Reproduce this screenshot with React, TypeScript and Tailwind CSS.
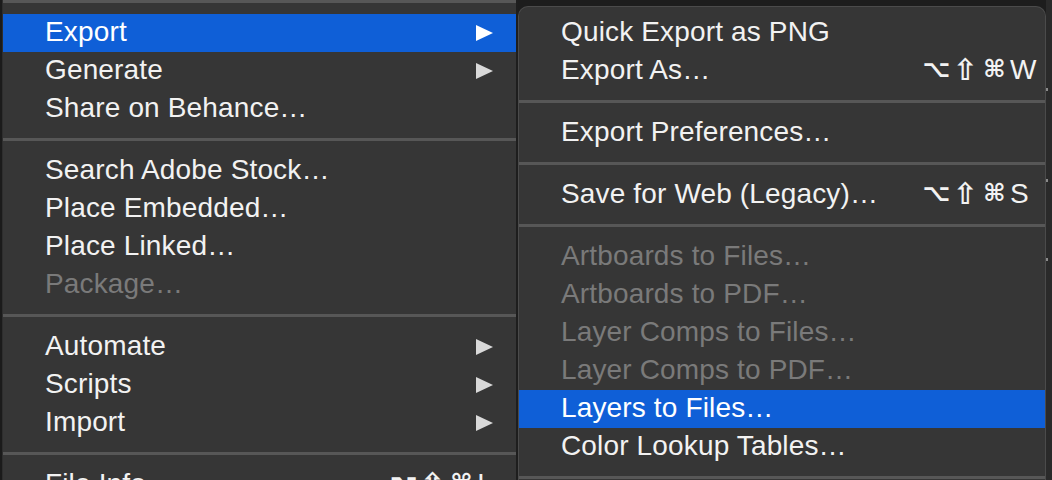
type Item =
  | { kind: 'sep' }
  | { kind: 'item'; label: string; disabled?: boolean; active?: boolean; arrow?: boolean; keys?: string };

const mainMenu: Item[] = [
  { kind: 'sep' },
  { kind: 'item', label: 'Export', active: true, arrow: true },
  { kind: 'item', label: 'Generate', arrow: true },
  { kind: 'item', label: 'Share on Behance…' },
  { kind: 'sep' },
  { kind: 'item', label: 'Search Adobe Stock…' },
  { kind: 'item', label: 'Place Embedded…' },
  { kind: 'item', label: 'Place Linked…' },
  { kind: 'item', label: 'Package…', disabled: true },
  { kind: 'sep' },
  { kind: 'item', label: 'Automate', arrow: true },
  { kind: 'item', label: 'Scripts', arrow: true },
  { kind: 'item', label: 'Import', arrow: true },
  { kind: 'sep' },
  { kind: 'item', label: 'File Info…', keys: 'I' },
];

const exportMenu: Item[] = [
  { kind: 'item', label: 'Quick Export as PNG' },
  { kind: 'item', label: 'Export As…', keys: 'W' },
  { kind: 'sep' },
  { kind: 'item', label: 'Export Preferences…' },
  { kind: 'sep' },
  { kind: 'item', label: 'Save for Web (Legacy)…', keys: 'S' },
  { kind: 'sep' },
  { kind: 'item', label: 'Artboards to Files…', disabled: true },
  { kind: 'item', label: 'Artboards to PDF…', disabled: true },
  { kind: 'item', label: 'Layer Comps to Files…', disabled: true },
  { kind: 'item', label: 'Layer Comps to PDF…', disabled: true },
  { kind: 'item', label: 'Layers to Files…', active: true },
  { kind: 'item', label: 'Color Lookup Tables…' },
  { kind: 'sep' },
  { kind: 'item', label: 'Convert Video…' },
];

function Separator({ first }: { first?: boolean }) {
  return (
    <div className={`h-[24px] shrink-0 pt-[10px] ${first ? '-mt-[10px]' : ''}`}>
      <div className="h-[3px] bg-[#575757]" />
    </div>
  );
}

function Shortcut({ letter }: { letter: string }) {
  return (
    <span className="flex items-center">
      <span className="inline-block w-[29px] text-center font-['DejaVu_Sans',sans-serif] text-[24px] font-bold">⌥</span>
      <span className="inline-block w-[29px] text-center font-['DejaVu_Sans',sans-serif] text-[30px] font-bold leading-[30px]">⇧</span>
      <span className="inline-block w-[29px] text-center font-['DejaVu_Sans',sans-serif] text-[24px] font-bold">⌘</span>
      <span className="ml-[1px]">{letter}</span>
    </span>
  );
}

function Arrow({ active }: { active?: boolean }) {
  return (
    <svg width="17" height="16" viewBox="0 0 17 16" className="mt-[3px]">
      <path d="M0 0 L17 8 L0 16 Z" fill={active ? '#ffffff' : '#d9d9d9'} />
    </svg>
  );
}

function Row({ item, side }: { item: Extract<Item, { kind: 'item' }>; side: 'main' | 'sub' }) {
  const color = item.disabled ? 'text-[#7a7a7a]' : 'text-[#f2f2f2]';
  return (
    <div
      className={`flex h-[38px] shrink-0 items-start pl-[42px] leading-[35px] tracking-[0.15px] ${color} ${
        item.active ? 'bg-[#0f5fd7] text-white' : ''
      } ${side === 'main' ? 'pr-[23px]' : ''}`}
    >
      <span className="flex-1 whitespace-nowrap">{item.label}</span>
      {item.keys && side === 'sub' && (
        <span className="w-[123px]">
          <Shortcut letter={item.keys} />
        </span>
      )}
      {item.keys && side === 'main' && (
        <span className="mr-[8px]">
          <Shortcut letter={item.keys} />
        </span>
      )}
      {item.arrow && (
        <span className="flex h-[35px] items-center">
          <Arrow active={item.active} />
        </span>
      )}
    </div>
  );
}

export default function App() {
  return (
    <div className="flex h-[480px] w-[1052px] overflow-hidden bg-[#1d1d1d] font-['Liberation_Sans',Arial,sans-serif] text-[28px]">
      <div className="w-[3px] shrink-0 border-r border-[#2e2e2e] bg-[#1b1b1b]" />

      <div className="flex w-[513px] shrink-0 flex-col bg-[#363636]">
        {mainMenu.map((item, i) =>
          item.kind === 'sep' ? (
            <Separator key={i} first={i === 0} />
          ) : (
            <Row key={i} item={item} side="main" />
          )
        )}
      </div>

      <div className="w-[2px] shrink-0 bg-[#1e1e1e]" />

      <div className="mt-[6px] flex w-[528px] shrink-0 flex-col rounded-t-[10px] border border-b-0 border-[#4b4b4b] bg-[#363636] pt-[7px]">
        {exportMenu.map((item, i) =>
          item.kind === 'sep' ? (
            <Separator key={i} />
          ) : (
            <Row key={i} item={item} side="sub" />
          )
        )}
      </div>

      <div className="flex flex-1 flex-col bg-[#2a2a2a]">
        <div className="mt-[88px] h-[3px] w-[2px] bg-[#8a8a8a]" />
        <div className="mt-[88px] h-[3px] w-[2px] bg-[#8a8a8a]" />
        <div className="mt-[76px] h-[3px] w-[2px] bg-[#8a8a8a]" />
      </div>
    </div>
  );
}
